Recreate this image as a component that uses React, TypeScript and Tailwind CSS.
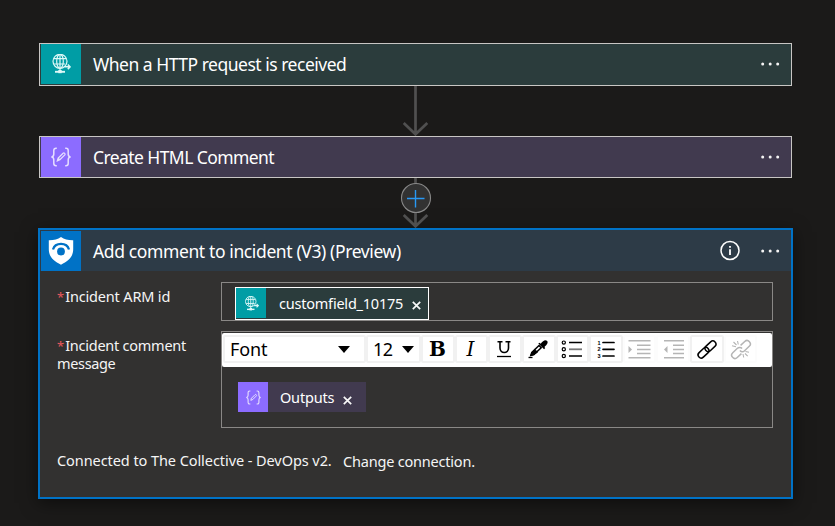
import type { ReactNode } from 'react';

function GlobeIcon({ size }: { size: number }) {
  return (
    <svg width={size} height={size} viewBox="0 0 20 20" fill="none" stroke="#ddf8f7" strokeWidth="1.2">
      <circle cx="9" cy="7.3" r="7" />
      <ellipse cx="9" cy="7.3" rx="3.3" ry="7" />
      <path d="M9 .4v14M2.800 4.600h12.400M2.800 10h11.500M9 14.500v3" />
      <path d="M7.300 17.600h3.400" strokeWidth="3.200" />
      <path d="M4 17.800h10" strokeWidth="1.900" />
      <path d="M13.500 12.800h5.800M16.800 10.500l2.300 2.300-2.300 2.300" strokeWidth="1.500" />
    </svg>
  );
}

function BracesIcon({ size }: { size: number }) {
  return (
    <svg width={size} height={size} viewBox="0 0 20 20" fill="none" stroke="#e6dfff" strokeWidth="1.500">
      <path d="M5.800 1.300H5c-1.500 0-2.200.8-2.200 2.200v3.600c0 1.800-.8 2.800-2.400 2.900 1.600.1 2.400 1.100 2.400 2.900v3.600c0 1.400.7 2.200 2.200 2.200h.8M14.200 1.300h.8c1.500 0 2.200.8 2.200 2.200v3.600c0 1.800.8 2.800 2.400 2.900-1.600.1-2.400 1.100-2.400 2.900v3.600c0 1.400-.7 2.200-2.200 2.200h-.8" />
      <path d="m6.400 13.800.8-2.700 4.900-4.900c1-.9 2.600.7 1.700 1.700L8.900 12.800l-2.500 1Zm1-2.300 1.200 1.200" strokeWidth="1.300" />
    </svg>
  );
}

function ShieldIcon() {
  return (
    <svg width="26" height="30" viewBox="0 0 26 30">
      <path d="M13 1c3.300 2.400 7.200 3.400 12.200 3.300v9c0 7.300-4.700 11.700-12.200 15.400C5.500 25 .8 20.600.8 13.300v-9C5.800 4.400 9.700 3.400 13 1Z" fill="#fff" />
      <circle cx="13" cy="15.500" r="3.900" fill="#0072c6" />
      <path d="M5 13.500c2.200-7.400 13.800-7.400 16 0" fill="none" stroke="#0072c6" strokeWidth="2.300" />
    </svg>
  );
}

function Dots() {
  return (
    <svg width="20" height="6" viewBox="0 0 20 6" fill="#f5f5f5">
      <circle cx="2.700" cy="3" r="1.500" />
      <circle cx="10.200" cy="3" r="1.500" />
      <circle cx="17.700" cy="3" r="1.500" />
    </svg>
  );
}

function Header({ icon, tile, label, info }: { icon: ReactNode; tile: string; label: ReactNode; info?: boolean }) {
  return (
    <div className="flex h-10 items-center pl-px">
      <div className={`flex size-10 shrink-0 items-center justify-center ${tile}`}>{icon}</div>
      <div className="ml-3 flex-1 whitespace-nowrap text-[17.500px] leading-10 text-white">{label}</div>
      {info && (
        <svg className="mb-px mr-[19px]" width="21" height="21" viewBox="0 0 21 21">
          <circle cx="10" cy="10.500" r="9" fill="none" stroke="#fff" strokeWidth="1.500" />
          <path d="M9.100 9.200h1.800V15H9.100zM9.100 5.900h1.800v1.800H9.100z" fill="#fff" />
        </svg>
      )}
      <div className="mr-[11px]"><Dots /></div>
    </div>
  );
}

function Connector({ plus }: { plus?: boolean }) {
  return (
    <svg className="block" width="753" height="50" viewBox="0 0 753 50">
      <path d="M376.500 0v48M364.700 37l11.800 11.300L388.300 37" fill="none" stroke="#505050" strokeWidth="2.700" />
      {plus && (
        <>
          <circle cx="377" cy="20" r="14.500" fill="#323232" stroke="#888" strokeWidth="1.100" />
          <path d="M368 20.500h17.500M376.500 12v17.500" stroke="#2899f5" strokeWidth="1.400" />
        </>
      )}
    </svg>
  );
}

function Tool({ children, pale }: { children: ReactNode; pale?: boolean }) {
  return (
    <div className={`flex h-7 w-[33.650px] items-center justify-center rounded-[2px] border-2 pr-px ${pale ? 'border-[#fcfcfc]' : 'border-[#f1f1f1]'}`}>
      <svg className="shrink-0" width="24" height="24" viewBox="0 0 24 24" fill="none" stroke={pale ? '#b5b5b5' : '#000'} strokeWidth="1.300">
        {children}
      </svg>
    </div>
  );
}

function CloseX() {
  return (
    <svg width="9" height="9" viewBox="0 0 9 9" stroke="#f8f8f8" strokeWidth="1.700">
      <path d="m.8.8 7.400 7.400M8.200.8.8 8.200" />
    </svg>
  );
}

function Caret() {
  return (
    <svg width="12" height="7" viewBox="0 0 12 7"><path d="M0 0h12L6 7Z" fill="#000" /></svg>
  );
}

export default function App() {
  return (
    <main className="h-[526px] w-[835px] overflow-hidden bg-[#1b1a19] pl-[39px] pt-[43px] font-['Noto_Sans','Open_Sans',sans-serif]">
      <section className="h-[43px] w-[753px] border border-[#c8c6c4] bg-[#2b3c3c]">
        <Header tile="bg-[#009da5]" icon={<GlobeIcon size={20} />} label={<span className="tracking-[-0.490px]">When a HTTP request is received</span>} />
      </section>
      <Connector />
      <section className="h-[42px] w-[753px] border border-[#c8c6c4] bg-[#413a4f]">
        <Header tile="bg-[#8c6cff]" icon={<BracesIcon size={20} />} label={<span className="tracking-[-0.580px]">Create HTML Comment</span>} />
      </section>
      <Connector plus />
      <section className="-ml-px h-[271px] w-[755px] border-2 border-[#0072c6] bg-[#323130] shadow-[0_4px_16px_rgba(0,0,0,0.500)]">
        <div className="h-[41px] bg-[#2d3b47] pt-px">
          <Header info tile="bg-[#0072c6]" icon={<ShieldIcon />} label={<span className="tracking-[-0.380px]">Add comment to incident (V3) (Preview)</span>} />
        </div>
        <div className="ml-[17px] mt-[11px] flex h-[39px]">
          <div className="w-[164px] whitespace-nowrap pt-[3px] text-[14.500px] leading-[22px] text-[#f5f5f5]">
            <span className="mr-px text-[13px] text-[#e8575c]">*</span><span className="tracking-[-0.170px]">Incident ARM id</span>
          </div>
          <div className="w-[552px] border border-[#8a8886] pl-[13px] pt-1">
            <div className="flex h-[33px] w-[194px] items-center border border-white bg-[#2b3c3c]">
              <div className="mb-px flex size-[30px] shrink-0 items-center justify-center bg-[#009da5]"><GlobeIcon size={15} /></div>
              <span className="mb-0.5 ml-[13px] w-[125px] whitespace-nowrap text-[14.500px] leading-[30px] tracking-[-0.220px] text-white">customfield_10175</span>
              <span className="ml-2 pt-[4px]"><CloseX /></span>
            </div>
          </div>
        </div>
        <div className="ml-[17px] mt-[10px] flex h-[97px]">
          <div className="w-[164px] whitespace-nowrap pt-[5px] text-[14.500px] leading-[18px] text-[#f5f5f5]">
            <div><span className="mr-px text-[13px] leading-none text-[#e8575c]">*</span><span className="tracking-[-0.250px]">Incident comment</span></div>
            <div className="tracking-[-0.350px]">message</div>
          </div>
          <div className="w-[552px] border border-[#8a8886] pt-px">
            <div className="flex h-[34px] rounded-[2px] bg-white pl-px pt-[2px]">
              <div className="flex h-7 w-[143px] items-center justify-between rounded-[2px] border-2 border-[#f1f1f1] pl-[5px] pr-[14px] text-[18px] tracking-[-0.100px] text-black"><span>Font</span><Caret /></div>
              <div className="flex h-7 w-[55px] items-center justify-between rounded-[2px] border-2 border-[#f1f1f1] pl-[5px] pr-[5px] text-[18px] tracking-[-0.500px] text-black"><span>12</span><Caret /></div>
              <Tool><text x="12.500" y="19" textAnchor="middle" fontFamily="DejaVu Serif" fontSize="20" fontWeight="700" fill="#000" stroke="none">B</text></Tool>
              <Tool><text x="11.500" y="19" textAnchor="middle" fontFamily="DejaVu Serif" fontSize="20" fontStyle="italic" fill="#000" stroke="none">I</text></Tool>
              <Tool><path d="M4.500 4.700h5M12.500 4.700h5M7 4.700V11c0 6 8.500 6 8.500 0V4.700" strokeWidth="1.600" /><path d="M4 19.500h14" /></Tool>
              <Tool><path d="m4.800 18.500 1-3 7.200-7 2.200 2.200-7.300 6.900-3.100.9Z" strokeWidth="1.500" /><path d="m12.300 6.500 1.200-.8 1.200 1c2.200-2.900 4.500-4.300 6.200-2.900 1.600 1.500.4 3.800-2.500 6.200l.8 1-1.100 1.200-5.800-5.700Z" fill="#000" stroke="none" /><path d="m5.800 15.500 3-3 2.700 2.600-3.500 2.500-3.200.9 1-3Z" fill="#000" strokeWidth="1" /><path d="M2.500 20.500h4" /></Tool>
              <Tool><path d="M9 5.500h13M9 19h13" /><path d="M9 12.300h13" stroke="#777" strokeWidth="1.800" /><g strokeWidth="1.200"><circle cx="3.800" cy="5.600" r="1.600" /><circle cx="3.800" cy="12.300" r="1.600" /><circle cx="3.800" cy="19" r="1.600" /></g></Tool>
              <Tool><path d="M9 5.500h11M9 12.300h11M9 19h11" strokeWidth="1.700" strokeLinecap="round" /><g fill="#000" stroke="none" fontFamily="Liberation Sans" fontSize="5.500" fontWeight="700"><text x="3.500" y="7.500">1</text><text x="3.500" y="14.300">2</text><text x="3.500" y="21">3</text></g></Tool>
              <Tool pale><path d="M1.500 3.700h22M10 8.200h13.500M10 12.400h13.500M10 16.500h13.500M1.500 20.700h22" strokeWidth="1.500" /><path d="m1.500 9 3.500 3.500L1.500 16Z" fill="#b5b5b5" stroke="none" /></Tool>
              <Tool pale><path d="M3 3.700h20M12 8.200h11M12 12.400h11M12 16.500h11M3 20.700h20" strokeWidth="1.500" /><path d="m6.500 9-3.500 3.500L6.500 16Z" fill="#b5b5b5" stroke="none" /></Tool>
              <Tool><g transform="translate(.5 0) rotate(-43 12.500 12.500)" strokeWidth="1.500"><rect x="1.500" y="9.400" width="12.500" height="6.200" rx="3.100" /><rect x="11" y="9.400" width="12.500" height="6.200" rx="3.100" /></g></Tool>
              <Tool pale><g transform="translate(.5 0) rotate(-43 12.500 12.500)"><path d="M10 15.800H4.300a3.300 3.300 0 0 1 0-6.600h6.400a3.300 3.300 0 0 1 3.300 3.300M15 9.200h5.700a3.300 3.300 0 0 1 0 6.600h-6.400a3.300 3.300 0 0 1-3.300-3.300" strokeWidth="1.500" /></g><path d="m4 8.800 4 .9M5.500 5l3 3M9.500 4l.8 3.500M15 17l.7 3.500M17 16.500l2.700 2.700M17.500 14.500l3.500.8" strokeWidth="1.100" /></Tool>
            </div>
            <div className="ml-4 mt-[15px] flex h-[30px] w-32 items-center bg-[#413a4f]">
              <div className="flex size-[30px] shrink-0 items-center justify-center bg-[#8c6cff]"><BracesIcon size={15} /></div>
              <span className="ml-3 w-[54px] whitespace-nowrap text-[14.500px] leading-[30px] tracking-[-0.200px] text-white">Outputs</span>
              <span className="ml-[9px] pt-[6px]"><CloseX /></span>
            </div>
          </div>
        </div>
        <div className="ml-[17px] mt-[21px] flex whitespace-nowrap text-[14.500px] leading-[22px] text-[#f5f5f5]">
          <span className="w-[286px] tracking-[-0.070px]">Connected to The Collective - DevOps v2.</span>
          <span className="pt-px tracking-[-0.200px]">Change connection.</span>
        </div>
      </section>
    </main>
  );
}
